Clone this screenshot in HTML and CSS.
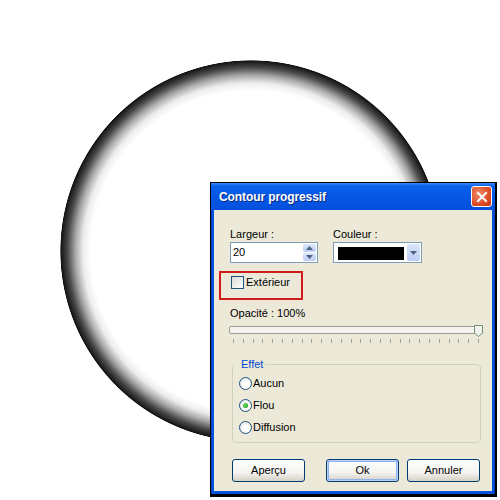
FILE: index.html
```html
<!DOCTYPE html>
<html lang="fr">
<head>
    <meta charset="UTF-8">
    <title>Contour progressif</title>
    <link rel="stylesheet" href="styles.css">
</head>
<body>

    <div class="stage">
        <!-- Preview of the feathered shape -->
        <div class="circle"></div>

        <!-- Dialog window -->
        <div class="dialog">
            <div class="titlebar">
                <span class="title">Contour progressif</span>
                <button class="close" aria-label="Fermer">
                    <svg width="12" height="12" viewBox="0 0 12 12">
                        <path d="M2 2 L10 10 M10 2 L2 10" stroke="#fff" stroke-width="2" stroke-linecap="square"/>
                    </svg>
                </button>
            </div>

            <div class="body">
                <div class="fields">
                    <div class="field">
                        <label>Largeur :</label>
                        <div class="spin">
                            <input type="text" value="20">
                            <div class="spin-btns">
                                <span class="spin-btn"><svg width="7" height="4" viewBox="0 0 7 4"><path d="M0 4 L3.5 0 L7 4Z" fill="#4d6185"/></svg></span>
                                <span class="spin-btn"><svg width="7" height="4" viewBox="0 0 7 4"><path d="M0 0 L3.5 4 L7 0Z" fill="#4d6185"/></svg></span>
                            </div>
                        </div>
                    </div>
                    <div class="field">
                        <label>Couleur :</label>
                        <div class="combo">
                            <span class="swatch"></span>
                            <span class="combo-btn"><svg width="7" height="4" viewBox="0 0 7 4"><path d="M0 0 L3.5 4 L7 0Z" fill="#4d6185"/></svg></span>
                        </div>
                    </div>
                </div>

                <div class="highlight">
                    <label class="check"><span class="box"></span>Extérieur</label>
                </div>

                <div class="opacity">Opacité : 100%</div>
                <div class="slider">
                    <div class="track"></div>
                    <svg class="thumb" width="9" height="12" viewBox="0 0 9 12">
                        <path d="M0.5 0.5 H8.5 V8 L4.5 11.5 L0.5 8 Z" fill="#f2f2ee" stroke="#6f8f74"/>
                    </svg>
                    <div class="ticks"></div>
                </div>

                <fieldset class="group">
                    <legend>Effet</legend>
                    <label class="radio"><span class="dot"></span>Aucun</label>
                    <label class="radio"><span class="dot on"></span>Flou</label>
                    <label class="radio"><span class="dot"></span>Diffusion</label>
                </fieldset>

                <div class="buttons">
                    <button class="btn">Aperçu</button>
                    <button class="btn default">Ok</button>
                    <button class="btn">Annuler</button>
                </div>
            </div>
        </div>
    </div>

</body>
</html>
```

FILE: styles.css
```css
body {
    margin: 0;
    background: #fff;
    font-family: 'Liberation Sans', Arial, sans-serif;
    font-size: 11px;
    line-height: 13px;
    color: #000;
}

.stage {
    position: relative;
    width: 500px;
    height: 500px;
    overflow: hidden;
}

/* Feathered circle */
.circle {
    position: absolute;
    left: 60px;
    top: 60px;
    width: 382px;
    height: 382px;
    border-radius: 50%;
    background: radial-gradient(circle closest-side, #fff 84%, #ececec 88%, #a8a8a8 92%, #4a4a4a 96%, #1c1c1c 99%, #111 99.6%, rgba(255,255,255,0) 100%);
}

/* Dialog window */
.dialog {
    position: absolute;
    left: 210px;
    top: 182px;
    width: 287px;
    height: 315px;
    box-sizing: border-box;
    border: 1px solid #000;
    border-right-width: 2px;
    border-bottom-width: 3px;
    background: linear-gradient(to right, #0a2d8c 0, #0553de 1px, #0553de calc(100% - 1px), #0a2d8c 100%);
    display: flex;
    flex-direction: column;
}

.titlebar {
    height: 27px;
    display: flex;
    align-items: center;
    justify-content: space-between;
    padding: 0 3px 0 8px;
    background: linear-gradient(#3b8df9 0, #0b60ea 3px, #0557e4 50%, #0450dc 100%);
}

.title {
    color: #fff;
    font-weight: bold;
    font-size: 12px;
    letter-spacing: -0.1px;
    padding-top: 2px;
    text-shadow: 1px 1px #0a2a7a;
}

.close {
    width: 21px;
    height: 21px;
    padding: 0;
    border: 1px solid #fff;
    border-radius: 3px;
    background: radial-gradient(circle at 35% 35%, #f08a6a, #d9441d 70%, #c0350f);
    display: flex;
    align-items: center;
    justify-content: center;
}

.body {
    flex: 1;
    margin: 0 3px 3px;
    background: #ece9d8;
    padding: 18px 0 0 16px;
}

/* Top fields */
.fields {
    display: flex;
    gap: 15px;
}

.field label {
    display: block;
    margin-bottom: 1px;
}

.spin {
    display: flex;
    width: 88px;
    height: 21px;
    box-sizing: border-box;
    border: 1px solid #7f9db9;
    background: #fff;
}

.spin input {
    flex: 1;
    min-width: 0;
    border: none;
    outline: none;
    padding: 0 0 0 2px;
    font: inherit;
    background: transparent;
}

.spin-btns {
    display: flex;
    flex-direction: column;
    gap: 1px;
    padding: 1px 1px 1px 0;
}

.spin-btn,
.combo-btn {
    width: 13px;
    flex: 1;
    display: flex;
    align-items: center;
    justify-content: center;
    background: linear-gradient(#dce6fc, #bccdf5);
    border-radius: 2px;
}

.combo {
    display: flex;
    width: 89px;
    height: 21px;
    box-sizing: border-box;
    border: 1px solid #7f9db9;
    background: #fff;
    padding: 1px;
    gap: 3px;
}

.swatch {
    width: 67px;
    height: 13px;
    margin: 3px 0 0 3px;
    background: #000;
}

.combo-btn {
    flex: none;
    height: 17px;
}

/* Checkbox with red annotation */
.highlight {
    width: 84px;
    height: 29px;
    box-sizing: border-box;
    margin: 8px 0 0 -11px;
    border: 2px solid #d21c1c;
    padding: 3px 0 0 10px;
}

.check {
    display: flex;
    align-items: center;
    gap: 2px;
}

.box {
    width: 13px;
    height: 13px;
    box-sizing: border-box;
    border: 1px solid #1c5180;
    background: linear-gradient(135deg, #dcdcd7, #fff);
}

/* Opacity slider */
.opacity {
    margin-top: 7px;
}

.slider {
    position: relative;
    margin: 6px 0 0 -1px;
    width: 254px;
}

.track {
    height: 8px;
    box-sizing: border-box;
    border: 1px solid #9c9c98;
    border-radius: 2px;
    background: #f4f3ee;
}

.thumb {
    position: absolute;
    right: 0;
    top: -1px;
}

.ticks {
    margin: 5px 0 0 4px;
    width: 246px;
    height: 4px;
    background: repeating-linear-gradient(to right, #a0a0a0 0 1px, transparent 1px 9.8px);
}

/* Effect group */
.group {
    margin: 15px 0 0 2px;
    width: 249px;
    box-sizing: border-box;
    border: 1px solid #d0d0bf;
    border-radius: 4px;
    padding: 1px 0 4px 6px;
}

.group legend {
    color: #0046d5;
    margin-left: -6px;
    padding: 0 2px 0 8px;
}

.radio {
    display: flex;
    align-items: center;
    gap: 1px;
    height: 22px;
}

.dot {
    width: 13px;
    height: 13px;
    box-sizing: border-box;
    border: 1px solid #1c5180;
    border-radius: 50%;
    background: radial-gradient(circle at 60% 60%, #fff 30%, #dcdcd7 100%);
    display: flex;
    align-items: center;
    justify-content: center;
}

.dot.on::after {
    content: "";
    width: 5px;
    height: 5px;
    border-radius: 50%;
    background: radial-gradient(circle at 40% 40%, #7be07b, #21a121 70%);
}

/* Bottom buttons */
.buttons {
    display: flex;
    margin: 16px 0 0 2px;
}

.btn {
    width: 73px;
    height: 23px;
    border: 1px solid #003c74;
    border-radius: 3px;
    background: linear-gradient(#fff, #f3f3ef 60%, #d6d0c5);
    font: inherit;
    color: #000;
    padding: 0;
}

.btn.default {
    margin-left: 21px;
    box-shadow: inset 0 0 0 1px #bcd2f6, inset 0 0 0 2px #8fb1ee;
}

.btn + .btn:not(.default) {
    margin-left: 8px;
}
```
